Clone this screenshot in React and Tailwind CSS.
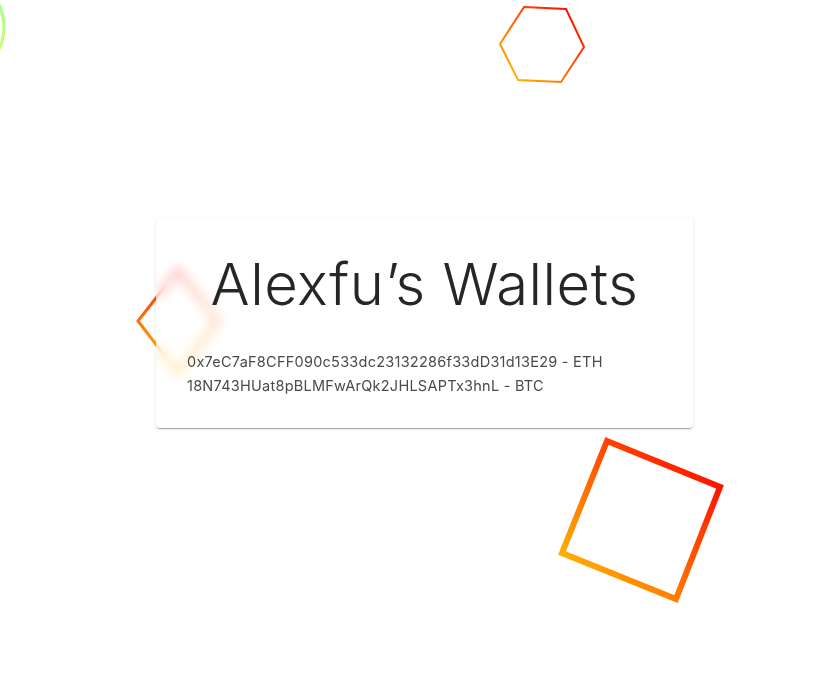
import React from 'react';

const wallets = [
  { addr: '0x7eC7aF8CFF090c533dc23132286f33dD31d13E29', coin: 'ETH' },
  { addr: '18N743HUat8pBLMFwArQk2JHLSAPTx3hnL', coin: 'BTC' },
];

function Shapes() {
  return (
    <svg className="absolute inset-0 w-full h-full pointer-events-none" viewBox="0 0 834 697">
      <defs>
        <linearGradient id="fire" x1="1" y1="0" x2="0" y2="1">
          <stop offset="0" stopColor="#ff0000" />
          <stop offset="0.15" stopColor="#ff1400" />
          <stop offset="1" stopColor="#ffcc00" />
        </linearGradient>
        <linearGradient id="fireV" x1="0" y1="0" x2="0" y2="1">
          <stop offset="0" stopColor="#ff1a10" />
          <stop offset="1" stopColor="#ffcc00" />
        </linearGradient>
        <linearGradient id="lime" x1="0" y1="0" x2="0" y2="1">
          <stop offset="0" stopColor="#70ff80" />
          <stop offset="1" stopColor="#d8ff40" />
        </linearGradient>
      </defs>
      <circle cx="-47" cy="27" r="51" fill="none" stroke="url(#lime)" strokeWidth="3" opacity="0.8" />
      <polygon points="524,7 566,9 584,47 561,82 518,80 500,44" fill="none" stroke="url(#fire)" strokeWidth="2" />
      <polygon points="138,321 178,270 218,321 178,373" fill="none" stroke="url(#fireV)" strokeWidth="3" />
      <polygon points="607,441 720,487 676,599 562,553" fill="none" stroke="url(#fire)" strokeWidth="6" />
    </svg>
  );
}

export default function App() {
  return (
    <div className="relative w-full min-h-screen bg-white overflow-hidden" style={{ fontFamily: 'Inter, "Open Sans", sans-serif' }}>
      <Shapes />
      <div className="relative pt-[218px] pl-[156px]">
        <div className="w-[537px] h-[210px] rounded bg-white/45 backdrop-blur-[6px] shadow-[0_2px_1px_-1px_rgba(0,0,0,0.2),0_1px_1px_0_rgba(0,0,0,0.14),0_1px_3px_0_rgba(0,0,0,0.12)] px-[31px] pt-[27px]">
          <h1 className="text-center text-[58px] leading-[78px] font-light text-[#262626] tracking-[0.5px]">Alexfu’s Wallets</h1>
          <div className="mt-[27px] text-[14.5px] leading-[24px] tracking-[0.25px] text-[#4a4a4a]">
            {wallets.map(w => (
              <p key={w.coin}>{w.addr} - {w.coin}</p>
            ))}
          </div>
        </div>
      </div>
    </div>
  );
}
